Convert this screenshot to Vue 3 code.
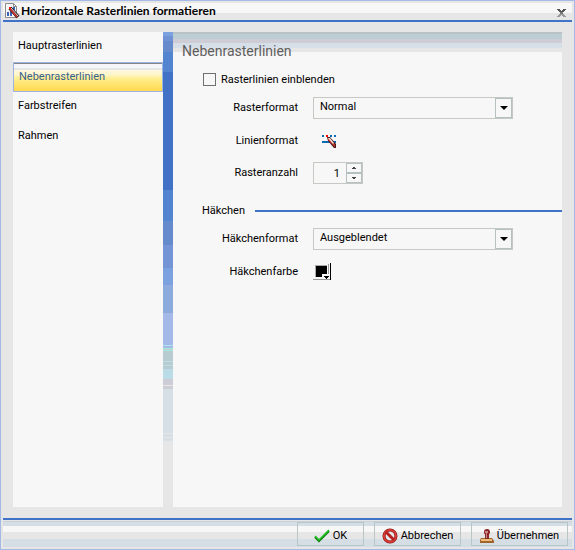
<script setup>
import { ref } from "vue"

const sections = ["Hauptrasterlinien", "Nebenrasterlinien", "Farbstreifen", "Rahmen"]
const activeSection = ref("Nebenrasterlinien")
const showLines = ref(false)
const gridFormat = ref("Normal")
const tickFormat = ref("Ausgeblendet")
const count = ref(1)

const changeCount = (step) => {
  count.value = Math.max(1, count.value + step)
}
</script>

<template>
  <div class="dialog">
    <header class="titlebar">
      <svg class="title-icon" width="16" height="16" viewBox="0 0 16 16">
        <path d="M1.500 .5h8l3 3v11h-11z" fill="#f7f7f7" stroke="#8c8c8c" />
        <path d="M9.500 .5v3h3" fill="none" stroke="#8c8c8c" />
        <path d="M3 9h2v4H3zM6 7h2v6H6zM9 4h2v3H9z" fill="#3a62b5" />
        <path d="M6 5l8 9" stroke="#2a1a1a" stroke-width="4" />
        <path d="M6 6l7 8" stroke="#d8302a" stroke-width="1.500" />
        <path d="M7 5l7 8" stroke="#f0dcd8" stroke-width="1" />
        <path d="M5 4h2v2H5z" fill="#e11" />
      </svg>
      <h1>Horizontale Rasterlinien formatieren</h1>
      <button class="close" type="button" aria-label="Schließen">
        <svg width="9" height="8" viewBox="0 0 9 8">
          <path d="M0 0h3v1h1v1h1V1h1V0h3v1H8v1H7v1H2V2H1V1H0z" fill="#555" />
          <path d="M3 3h3v2H3z" fill="#777" />
          <path d="M2 5h5v1h1v1h1v1H6V7H5V6H4v1H3v1H0V7h1V6h1z" fill="#999" />
        </svg>
      </button>
    </header>

    <main class="body">
      <nav class="sections">
        <button
          v-for="section in sections"
          :key="section"
          type="button"
          :class="{ active: section === activeSection }"
          @click="activeSection = section"
        >
          {{ section }}
        </button>
      </nav>
      <div class="stripe"></div>
      <section class="panel">
        <h2>Nebenrasterlinien</h2>
        <div class="check-row">
          <input id="show-lines" v-model="showLines" type="checkbox" />
          <label for="show-lines">Rasterlinien einblenden</label>
        </div>
        <div class="field">
          <label for="grid-format">Rasterformat</label>
          <div class="select">
            <select id="grid-format" v-model="gridFormat">
              <option>Normal</option>
            </select>
            <span class="arrow"></span>
          </div>
        </div>
        <div class="field line-field">
          <label for="line-format">Linienformat</label>
          <button id="line-format" class="tool" type="button">
            <svg width="18" height="16" viewBox="0 0 18 16">
              <path d="M2 2h2v2H2zM10 2h2v2h-2zM14 2h2v2h-2zM2 8h14v2H2z" fill="#0b6cb5" />
              <path d="M7 4h3l6 7v4h-2L8 8z" fill="#4a1c1c" />
              <path d="M8 5h1l6 7v2L8 7z" fill="#d0382c" />
              <path d="M8 5h2l4 5-1 1z" fill="#f0e4e0" />
              <path d="M6 2h2v2H6z" fill="#f00" />
            </svg>
          </button>
        </div>
        <div class="field">
          <label for="grid-count">Rasteranzahl</label>
          <div class="spinner">
            <input id="grid-count" v-model.number="count" type="text" />
            <div class="steps">
              <button type="button" aria-label="Mehr" @click="changeCount(1)">
                <svg width="4" height="2" viewBox="0 0 4 2"><path d="M1 0h2v1h1v1H0V1h1z" fill="#444" /></svg>
              </button>
              <button type="button" aria-label="Weniger" @click="changeCount(-1)">
                <svg width="4" height="2" viewBox="0 0 4 2"><path d="M0 0h4v1H3v1H1V1H0z" fill="#444" /></svg>
              </button>
            </div>
          </div>
        </div>
        <h3>Häkchen</h3>
        <div class="field">
          <label for="tick-format">Häkchenformat</label>
          <div class="select">
            <select id="tick-format" v-model="tickFormat">
              <option>Ausgeblendet</option>
            </select>
            <span class="arrow"></span>
          </div>
        </div>
        <div class="field">
          <label for="tick-color">Häkchenfarbe</label>
          <button id="tick-color" class="color" type="button">
            <svg width="18" height="18" viewBox="0 0 18 18">
              <path d="M0 16h17v1H0zM15 1h1v15h-1z" fill="#999" />
              <path d="M17 0h1v17h-1z" fill="#000" />
              <path d="M2 2h12v12H2z" fill="#aaa" />
              <path d="M3 3h11v11H3z" fill="#000" />
              <path d="M9 11h7v5h-5v-2H9z" fill="#f7f7f7" />
              <path d="M11 13h5v1h-1v1h-1v1h-1v-1h-1v-1h-1z" fill="#000" />
            </svg>
          </button>
        </div>
      </section>
    </main>

    <footer class="actions">
      <button class="ok" type="button">
        <svg width="16" height="14" viewBox="0 0 16 14">
          <path d="M1 8l4 4L15 2" fill="none" stroke="#087a08" stroke-width="2" />
          <path d="M1 7l4 4L15 1" fill="none" stroke="#22c422" stroke-width="1.500" />
        </svg>
        OK
      </button>
      <button class="cancel" type="button">
        <svg width="16" height="16" viewBox="0 0 16 16">
          <circle cx="8" cy="8" r="6" fill="#e6e6e6" stroke="#7d1010" stroke-width="3" />
          <circle cx="8" cy="8" r="6" fill="none" stroke="#d83a36" stroke-width="2" />
          <path d="M4 4l8 8" stroke="#b82020" stroke-width="3" />
        </svg>
        Abbrechen
      </button>
      <button class="apply" type="button">
        <svg width="14" height="14" viewBox="0 0 14 14">
          <path d="M1 9h11l2 3v2H0v-3z" fill="#a0642c" />
          <path d="M1 10h11v2H1z" fill="#eebb78" />
          <path d="M5 5h4v5H5z" fill="#8a2b2b" />
          <circle cx="7" cy="3" r="3" fill="#8a2424" />
          <path d="M5 2h3v2H7v5H6V4H5z" fill="#c98888" />
        </svg>
        Übernehmen
      </button>
    </footer>
  </div>
</template>

<style>
body {
  background: #e6e6e6;
}
</style>

<style scoped>
.dialog {
  box-sizing: border-box;
  min-height: 100vh;
  display: flex;
  flex-direction: column;
  padding: 2px;
  border: 1px solid #a4b9e6;
  background: #e6e6e6;
  font-family: Roboto, "Noto Sans", sans-serif;
  font-size: 11px;
  line-height: 16px;
  color: #000;
}

button,
input,
select {
  box-sizing: border-box;
  margin: 0;
  padding: 0;
  border: 0;
  border-radius: 0;
  background: none;
  font: inherit;
  color: inherit;
}

svg {
  display: block;
  flex: none;
}

.titlebar {
  display: flex;
  align-items: flex-start;
  gap: 1px;
  height: 17px;
  padding: 0 5px 0 1px;
  border-bottom: 2px solid #4073c8;
  background: linear-gradient(#f7f7f7 10px, #e6e6e6 10px);
}

.titlebar h1 {
  flex: 1;
  margin: 0;
  font-family: Lato, sans-serif;
  font-size: 12px;
  line-height: 15px;
}

.close {
  padding: 6px 1px 0 0;
}

.body {
  flex: 1;
  display: flex;
  padding: 10px 10px 11px;
}

.sections {
  flex: 0 0 150px;
  display: flex;
  flex-direction: column;
  background: #f7f7f7;
}

.sections button {
  height: 30px;
  padding: 0 5px 2px;
  text-align: left;
}

.sections button.active {
  padding: 0 5px;
  border: 1px solid #9db5e3;
  color: #38618a;
  background: linear-gradient(#858585 1px, #f5f3fa 1px, #f7f7f7 5px, #e6e6e6 5px, #e6e6e6 7px, #fff7df 7px, #fff5c9 12px, #fff2a0 14px, #ffe981 18px, #ffe46c 22px, #ffda57 26px);
}

.stripe {
  flex: 0 0 10px;
  background: linear-gradient(
    #7ba2df 4px, #7091d3 4px, #7091d3 9px, #658bcd 9px, #658bcd 20px, #5284cf 20px,
    #5284cf 40px, #4272c6 40px, #4272c6 158px, #5284cf 158px, #5284cf 189px, #658bcd 189px,
    #658bcd 213px, #7594d5 213px, #7594d5 236px, #7ba2df 236px, #7ba2df 253px, #8caadb 253px,
    #8caadb 281px, #a5b9e8 281px, #a5b9e8 313px, #b0e3ed 313px, #b0e3ed 314px, #a5b9e8 314px,
    #a5b9e8 316px, #a8eadb 316px, #a8eadb 317px, #b8cbd0 317px, #b8cbd0 318px, #a8eadb 318px,
    #a8eadb 319px, #b8cbd0 319px, #b8cbd0 329px, #b9dce6 329px, #b9dce6 330px, #b8cbd0 330px,
    #b8cbd0 333px, #b9dce6 333px, #b9dce6 334px, #b8cbd0 334px, #b8cbd0 337px, #b9dce6 337px,
    #b9dce6 347px, #cecdd6 347px, #cecdd6 353px, #e6e6e6 353px, #e6e6e6 354px, #cecdd6 354px,
    #cecdd6 357px, #d6dee6 357px, #d6dee6 401px, #e6e6e6 401px, #e6e6e6 402px, #d6dee6 402px,
    #d6dee6 405px, #e6e6e6 405px, #e6e6e6 406px, #d6dee6 406px, #d6dee6 409px, #e6e6e6 409px
  );
}

.panel {
  flex: 1;
  min-width: 0;
  padding: 10px 0 0 30px;
  background: linear-gradient(#b9c3c5 2px, #bdcdd4 2px, #bdcdd4 7px, #cecdd6 7px, #cecdd6 11px, #d6dfe7 11px, #d6dfe7 16px, #e6e6e6 16px, #e6e6e6 20px, #f7f7f7 20px);
}

.panel h2 {
  margin: 0 0 10px -21px;
  font-size: 14px;
  line-height: 18px;
  font-weight: 400;
  color: #5e5e5e;
}

.check-row {
  display: flex;
  align-items: center;
  gap: 5px;
  height: 18px;
  margin-bottom: 9px;
}

.check-row label {
  padding-top: 2px;
}

.check-row input {
  appearance: none;
  width: 13px;
  height: 13px;
  border: 1px solid #707070;
  background: #f7f7f7;
}

.check-row input:checked {
  background: #4073c8;
}

.field {
  display: flex;
  align-items: center;
  gap: 15px;
  height: 22px;
  margin-bottom: 11px;
}

.line-field {
  height: 21px;
}

.field label {
  flex: 0 0 95px;
  text-align: right;
}

.select {
  display: grid;
  grid-template-columns: 1fr 17px;
  flex: 0 1 200px;
  box-sizing: border-box;
  height: 22px;
  border: 1px solid #c6c9c3;
}

.select select {
  grid-area: 1 / 1 / 2 / 3;
  appearance: none;
  padding: 0 18px 2px 6px;
}

.arrow {
  grid-area: 1 / 2;
  display: flex;
  align-items: center;
  justify-content: center;
  border: 1px solid #b5c0c0;
  pointer-events: none;
}

.arrow::before {
  content: "";
  border: 4px solid transparent;
  border-top-color: #000;
  border-bottom: 0;
}

.tool {
  padding: 0 0 0 7px;
}

.spinner {
  display: flex;
  box-sizing: border-box;
  width: 50px;
  height: 22px;
  border: 1px solid #c6c9c3;
}

.spinner input {
  flex: 1;
  min-width: 0;
  padding: 2px 6px 0 0;
  text-align: right;
}

.steps {
  display: grid;
  grid-template-rows: 1fr 1fr;
  width: 16px;
}

.steps button {
  display: flex;
  align-items: center;
  justify-content: center;
  border: 1px solid #b5c0c0;
}

.panel h3 {
  display: flex;
  align-items: center;
  gap: 10px;
  height: 16px;
  margin: 19px 0 9px -1px;
  font-size: 11px;
  font-weight: 400;
}

.panel h3::after {
  content: "";
  flex: 1;
  height: 2px;
  background: #4073c8;
}

.actions {
  display: flex;
  justify-content: flex-end;
  gap: 10px;
  padding: 2px 4px 1px;
  border-top: 2px solid #4073c8;
  background: linear-gradient(#e6e6e6 1px, #c8d2d8 1px, #c8d2d8 2px, #d6dee5 2px, #d6dee5 6px, #f7f7f7 6px, #f7f7f7 12px, #e6e6e6 12px, #e6e6e6 19px, #d6dee5 19px);
}

.actions button {
  display: flex;
  align-items: center;
  justify-content: center;
  gap: 3px;
  height: 24px;
  padding-top: 4px;
  border: 1px solid #b9c6c6;
}

.ok {
  width: 67px;
}

.cancel {
  width: 87px;
}

.apply {
  width: 97px;
}
</style>
